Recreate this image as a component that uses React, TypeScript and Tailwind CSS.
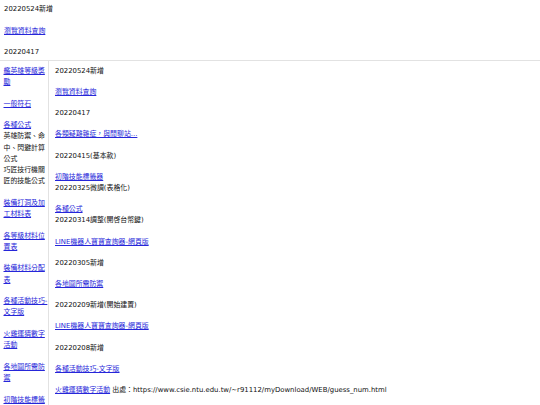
// 更新紀錄頁 - 左側目錄 + 右側更新清單

const linkCls = 'text-[#2626d9] underline';

type Item = { text: string; href?: boolean; lines?: { text: string; href?: boolean }[] };

const sideItems: Item[] = [
  { text: '艦英雄等級獎勵', href: true },
  { text: '一般符石', href: true },
  {
    text: '各種公式',
    href: true,
    lines: [{ text: '英雄防禦、命中、閃避計算公式' }, { text: '巧匠技行機關匠的技能公式' }],
  },
  { text: '裝備打洞及加工材料表', href: true },
  { text: '各等級材料位置表', href: true },
  { text: '裝備材料分配表', href: true },
  { text: '各種活動技巧-文字版', href: true },
  { text: '火雞運猜數字活動', href: true },
  { text: '各地圖所需防禦', href: true },
  { text: '初階技能標籤器', href: true },
];

const logItems: Item[] = [
  { text: '20220524新增' },
  { text: '瀏覽資料查詢', href: true },
  { text: '20220417' },
  { text: '各類疑難雜症，與閒聊站...', href: true },
  { text: '20220415(基本款)' },
  { text: '初階技能標籤器', href: true, lines: [{ text: '20220325微調(表格化)' }] },
  { text: '各種公式', href: true, lines: [{ text: '20220314調整(開啓台幣鍵)' }] },
  { text: 'LINE機器人寶寶查詢器-網頁版', href: true },
  { text: '20220305新增' },
  { text: '各地圖所需防禦', href: true },
  { text: '20220209新增(開始建置)' },
  { text: 'LINE機器人寶寶查詢器-網頁版', href: true },
  { text: '20220208新增' },
  { text: '各種活動技巧-文字版', href: true },
];

function Line({ text, href }: { text: string; href?: boolean }) {
  return href ? <a className={linkCls}>{text}</a> : <span>{text}</span>;
}

function Para({ item }: { item: Item }) {
  return (
    <p>
      <Line text={item.text} href={item.href} />
      {item.lines?.map((l, i) => (
        <span key={i}>
          <br />
          <Line text={l.text} href={l.href} />
        </span>
      ))}
    </p>
  );
}

export default function App() {
  return (
    <div className="min-h-screen bg-white text-[#111] text-[6.9px] leading-[11.2px] font-['DejaVu_Sans','Noto_Sans_CJK_TC',sans-serif]">
      {/* 頂部 */}
      <div className="px-[4px] pt-[4.4px] flex flex-col gap-[10px]">
        <p>20220524新增</p>
        <p>
          <a className={linkCls}>瀏覽資料查詢</a>
        </p>
        <p>20220417</p>
      </div>

      {/* 表格 */}
      <div className="mt-[2.4px] flex border-t border-[#e2e2e2]">
        <div className="w-[49px] shrink-0 border-r border-[#e2e2e2] pl-[3.5px] pr-0 pt-[4.4px] flex flex-col gap-[10.4px]">
          {sideItems.map((it, i) => (
            <Para key={i} item={it} />
          ))}
        </div>
        <div className="flex-1 pl-[6px] pt-[4.4px] flex flex-col gap-[10px]">
          {logItems.map((it, i) => (
            <Para key={i} item={it} />
          ))}
          <p>
            <a className={linkCls}>火雞運猜數字活動</a> 出處：https://www.csie.ntu.edu.tw/~r91112/myDownload/WEB/guess_num.html
          </p>
        </div>
      </div>
    </div>
  );
}
